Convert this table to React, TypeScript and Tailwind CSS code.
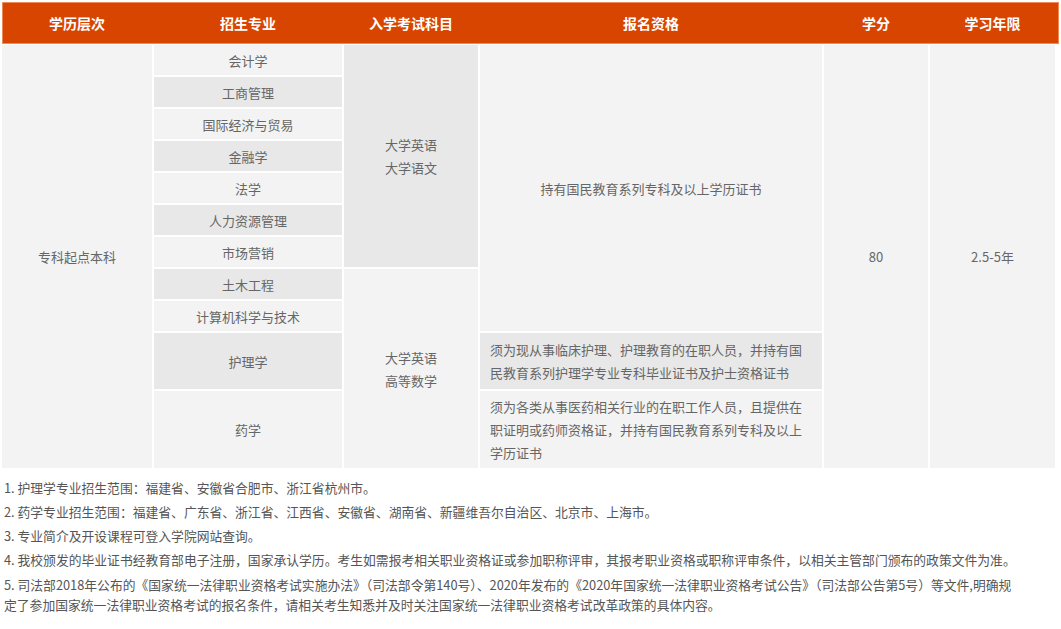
const majors = [
  '会计学',
  '工商管理',
  '国际经济与贸易',
  '金融学',
  '法学',
  '人力资源管理',
  '市场营销',
  '土木工程',
  '计算机科学与技术',
  '护理学',
  '药学',
];

const headers = ['学历层次', '招生专业', '入学考试科目', '报名资格', '学分', '学习年限'];

const LIGHT = 'bg-[#f3f3f3]';
const DARK = 'bg-[#e8e8e8]';

// grid column / row placement for each major, written out so tailwind picks them up
const majorRows = [
  'row-start-1',
  'row-start-2',
  'row-start-3',
  'row-start-4',
  'row-start-5',
  'row-start-6',
  'row-start-7',
  'row-start-8',
  'row-start-9',
  'row-start-10',
  'row-start-11',
];

function Cell({ className = '', children }: { className?: string; children?: React.ReactNode }) {
  return (
    <div className={['flex items-center justify-center text-center', className].join(' ')}>
      {children}
    </div>
  );
}

export default function App() {
  return (
    <div className="min-h-screen bg-white px-[2px] pt-[2px] font-['Noto_Sans_CJK_SC','Noto_Sans',sans-serif]">
      {/* orange header bar */}
      <div className="grid h-[42px] grid-cols-[150px_188px_134px_342px_104px_125px] gap-x-[2px] bg-[#d84500] text-[14px] font-bold text-white shadow-[inset_0_0_0_1px_#ee8a55]">
        {headers.map((h) => (
          <div key={h} className="flex items-center justify-center">
            {h}
          </div>
        ))}
      </div>

      {/* body */}
      <div className="mt-[1px] grid grid-cols-[150px_188px_134px_342px_104px_125px] grid-rows-[repeat(9,30px)_56px_77px] gap-[2px] text-[13px] leading-[23px] text-[#666]">
        <Cell className={`col-start-1 row-start-1 row-span-11 ${LIGHT}`}>专科起点本科</Cell>

        {majors.map((m, i) => (
          <Cell key={m} className={`col-start-2 ${majorRows[i]} ${i % 2 === 0 ? LIGHT : DARK}`}>
            {m}
          </Cell>
        ))}

        <Cell className={`col-start-3 row-start-1 row-span-7 ${DARK}`}>
          <div>
            大学英语
            <br />
            大学语文
          </div>
        </Cell>
        <Cell className={`col-start-3 row-start-8 row-span-4 ${LIGHT}`}>
          <div>
            大学英语
            <br />
            高等数学
          </div>
        </Cell>

        <Cell className={`col-start-4 row-start-1 row-span-9 ${LIGHT}`}>持有国民教育系列专科及以上学历证书</Cell>
        <div className={`col-start-4 row-start-10 flex items-center px-[10px] ${DARK}`}>
          须为现从事临床护理、护理教育的在职人员，并持有国民教育系列护理学专业专科毕业证书及护士资格证书
        </div>
        <div className={`col-start-4 row-start-11 flex items-center px-[10px] ${LIGHT}`}>
          须为各类从事医药相关行业的在职工作人员，且提供在职证明或药师资格证，并持有国民教育系列专科及以上学历证书
        </div>

        <Cell className={`col-start-5 row-start-1 row-span-11 ${LIGHT}`}>80</Cell>
        <Cell className={`col-start-6 row-start-1 row-span-11 ${LIGHT}`}>2.5-5年</Cell>
      </div>

      {/* notes */}
      <div className="mt-[10px] pl-[2px] text-[12.8px] leading-[20px] text-[#555]">
        <p className="mb-[4px]">1. 护理学专业招生范围：福建省、安徽省合肥市、浙江省杭州市。</p>
        <p className="mb-[4px]">
          2. 药学专业招生范围：福建省、广东省、浙江省、江西省、安徽省、湖南省、新疆维吾尔自治区、北京市、上海市。
        </p>
        <p className="mb-[4px]">3. 专业简介及开设课程可登入学院网站查询。</p>
        <p className="mb-[5px]">
          4. 我校颁发的毕业证书经教育部电子注册，国家承认学历。考生如需报考相关职业资格证或参加职称评审，其报考职业资格或职称评审条件，以相关主管部门颁布的政策文件为准。
        </p>
        <p>
          5. 司法部2018年公布的《国家统一法律职业资格考试实施办法》（司法部令第140号）、2020年发布的《2020年国家统一法律职业资格考试公告》（司法部公告第5号）等文件,明确规
          <br />
          定了参加国家统一法律职业资格考试的报名条件，请相关考生知悉并及时关注国家统一法律职业资格考试改革政策的具体内容。
        </p>
      </div>
    </div>
  );
}
